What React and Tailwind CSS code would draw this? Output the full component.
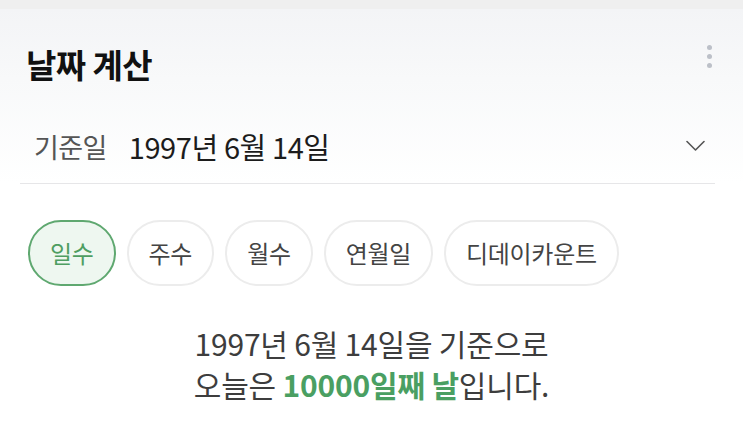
import React from 'react';

const tabs = ['일수', '주수', '월수', '연월일', '디데이카운트'];

export default function App() {
  const active = 0;

  return (
    <div
      className="w-[743px] h-[431px] overflow-hidden bg-white"
      style={{ fontFamily: '"Noto Sans CJK KR", "Noto Sans", sans-serif' }}
    >
      <div className="h-[9px] bg-[#efefef]" />
      <div className="bg-gradient-to-b from-[#f3f4f6] via-[#f8f9fa] via-40% to-white px-[20px] pr-[28px]">
        <div className="flex items-start justify-between h-[80px] pt-[33px] pl-[6px]">
          <h1 className="text-[33px] font-bold leading-[44px] text-[#111] tracking-[-0.6px]">날짜 계산</h1>
          <div className="flex flex-col gap-[4px] pt-[3px] pr-[3px]">
            <span className="w-[5px] h-[5px] rounded-full bg-[#bcc0c8]" />
            <span className="w-[5px] h-[5px] rounded-full bg-[#bcc0c8]" />
            <span className="w-[5px] h-[5px] rounded-full bg-[#bcc0c8]" />
          </div>
        </div>
        <div className="flex items-center h-[95px] pt-[22px] border-b border-[#e6e6e8] pr-[10px]">
          <div className="flex items-center flex-1 pl-[14px]">
            <span className="text-[27px] text-[#555] tracking-[-0.6px]">기준일</span>
            <span className="ml-[22px] text-[29px] text-[#1c1c1c] tracking-[-0.4px]">1997년 6월 14일</span>
          </div>
          <svg width="19" height="12" viewBox="0 0 19 12" fill="none" className="mb-[2px]">
            <path d="M1 1.5 L9.5 10 L18 1.5" stroke="#555" strokeWidth="1.6" strokeLinecap="round" strokeLinejoin="round" />
          </svg>
        </div>
      </div>
      <div className="flex gap-[11px] pl-[28px] mt-[36px]">
        {tabs.map((t, i) => (
          <button
            key={t}
            className={
              i === active
                ? 'h-[66px] px-[20px] rounded-full border-2 border-[#5fa870] bg-[#eef7f0] text-[24px] text-[#4e9e62] tracking-[-0.3px]'
                : 'h-[66px] px-[20px] rounded-full border-2 border-[#ececec] bg-white text-[24px] text-[#444] tracking-[-0.3px]'
            }
          >
            {t}
          </button>
        ))}
      </div>
      <div className="mt-[37px] text-center text-[30px] leading-[41px] text-[#3d3d3d] tracking-[-0.2px]">
        <p>1997년 6월 14일을 기준으로</p>
        <p>
          오늘은 <span className="text-[#4a9f62] font-semibold">10000일째 날</span>입니다.
        </p>
      </div>
    </div>
  );
}
